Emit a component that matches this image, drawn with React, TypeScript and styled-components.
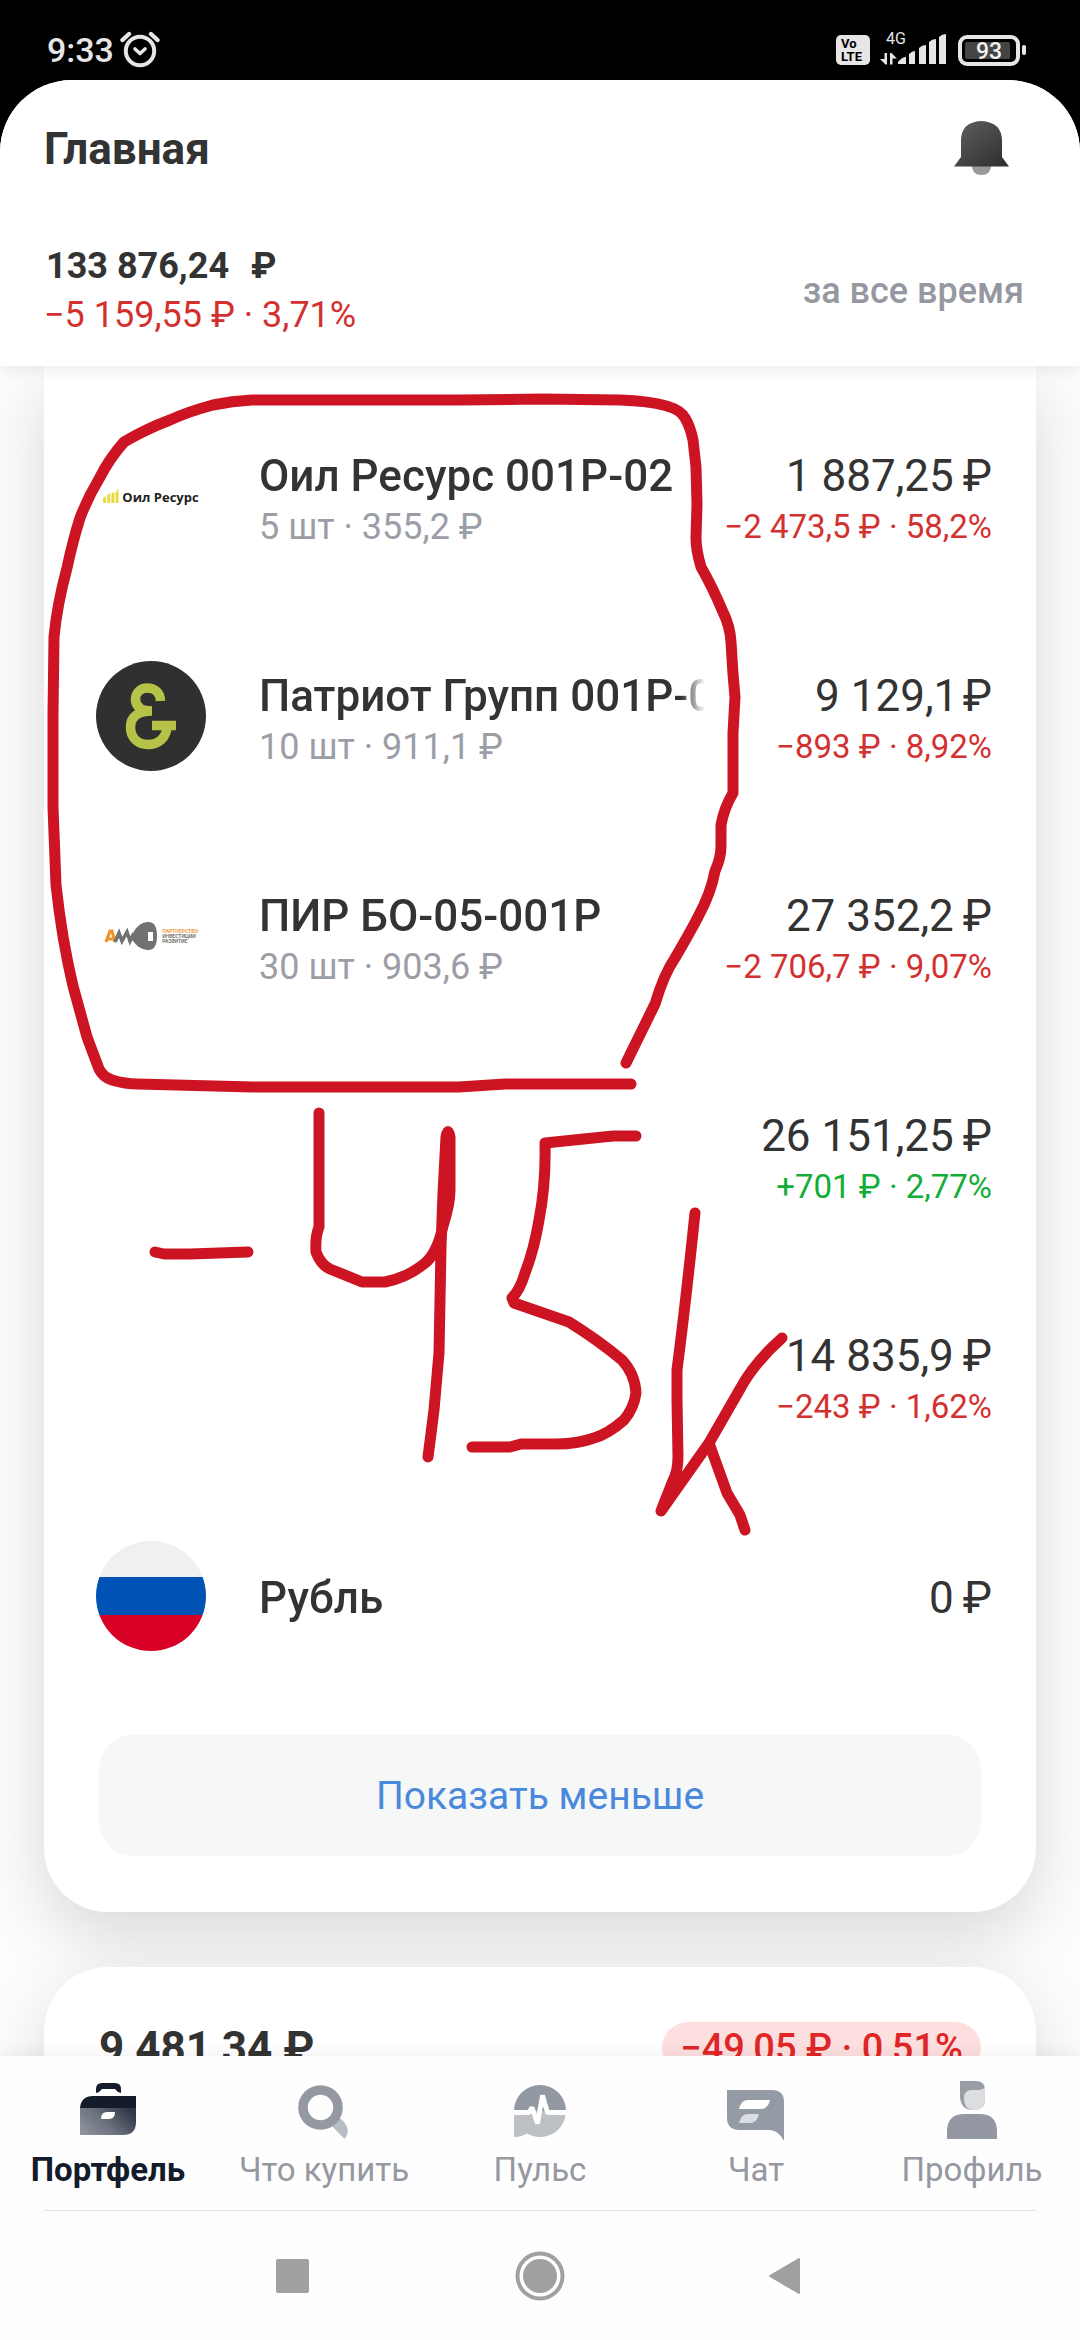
import React from 'react';
import styled, { createGlobalStyle } from 'styled-components';

const GlobalStyle = createGlobalStyle`
  *, *::before, *::after { box-sizing: border-box; }
  body { margin: 0; background: #000; }
  button { border: 0; padding: 0; background: none; font: inherit; color: inherit; cursor: pointer; }
  svg { display: block; flex: none; }
`;

const ink = '#333333';
const muted = '#9598a0';
const red = '#d3312f';
const green = '#12ad36';
const marker = '#cd1423';

const Screen = styled.div`
  display: flex;
  flex-direction: column;
  height: 100vh;
  overflow: hidden;
  background: #000;
  color: ${ink};
  font-family: Roboto, 'Noto Sans', sans-serif;
`;

const StatusBar = styled.div`
  display: flex;
  flex: none;
  align-items: center;
  justify-content: space-between;
  height: 80px;
  padding: 20px 54px 0 47px;
  color: #e6e6e6;
`;

const StatusGroup = styled.div<{ $gap: number }>`
  display: flex;
  align-items: center;
  gap: ${(p) => p.$gap}px;
`;

const Clock = styled.span`
  font-size: 34px;
  line-height: 40px;
  font-weight: 500;
`;

const Volte = styled.span`
  display: flex;
  flex-direction: column;
  width: 34px;
  height: 30px;
  padding: 2px 5px;
  border-radius: 5px;
  background: #e6e6e6;
  color: #000;
  font-size: 13px;
  line-height: 13px;
  font-weight: 700;
`;

const Battery = styled.span`
  display: flex;
  align-items: center;
  gap: 2px;

  &::after {
    content: '';
    width: 4px;
    height: 10px;
    border-radius: 2px;
    background: #e6e6e6;
  }
`;

const BatteryBody = styled.span`
  width: 62px;
  height: 31px;
  padding: 3px;
  border: 4px solid #e6e6e6;
  border-radius: 9px;
`;

const BatteryLevel = styled.span`
  display: block;
  width: 45px;
  height: 17px;
  border-radius: 2px;
  background: #444;
  color: #f2f2f2;
  font-size: 23px;
  line-height: 19px;
  font-weight: 500;
  text-align: center;
  text-indent: 3px;
`;

const Sheet = styled.div`
  display: flex;
  flex: 1;
  flex-direction: column;
  min-height: 0;
  overflow: hidden;
  border-radius: 72px 72px 0 0;
  background: #fdfdfd;
`;

const Header = styled.header`
  flex: none;
  z-index: 1;
  background: #fff;
  box-shadow: 0 4px 14px rgba(0, 0, 0, 0.08);
`;

const TitleRow = styled.div`
  display: flex;
  align-items: center;
  justify-content: space-between;
  height: 138px;
  padding: 0 70px 0 44px;
`;

const Title = styled.h1`
  margin: 0;
  font-size: 44px;
  line-height: 52px;
  font-weight: 700;
`;

const Summary = styled.div`
  display: flex;
  align-items: center;
  justify-content: space-between;
  height: 148px;
  padding: 0 56px 2px 44px;
  font-size: 36px;
  line-height: 49px;
`;

const Total = styled.div`
  display: flex;
  gap: 22px;
  padding-left: 2px;
  font-weight: 700;
`;

const TotalChange = styled.div`
  color: ${red};
`;

const Period = styled.button`
  color: ${muted};
  font-weight: 500;
`;

const Feed = styled.main`
  display: flex;
  flex: 1;
  flex-direction: column;
  gap: 55px;
  min-height: 0;
  padding: 0 44px;
  overflow: hidden;
`;

const Card = styled.section<{ $continued?: boolean }>`
  position: relative;
  flex: none;
  border-radius: ${(p) => (p.$continued ? '0 0 64px 64px' : '64px')};
  background: #fff;
  box-shadow: 0 24px 70px rgba(0, 0, 0, 0.15);
`;

const Positions = styled.ul`
  margin: 0;
  padding: 20px 44px 0 52px;
  list-style: none;
`;

const Position = styled.li`
  display: grid;
  grid-template-columns: 163px minmax(0, 446px) 1fr;
  align-items: center;
  height: 220px;
`;

const Lines = styled.div`
  padding-top: 4px;

  &:has(> :nth-child(2)) { padding-top: 10px; }
`;

const Name = styled.div`
  overflow: hidden;
  font-size: 44px;
  line-height: 52px;
  font-weight: 500;
  white-space: nowrap;
  mask-image: linear-gradient(to right, #000 calc(100% - 24px), transparent);
`;

const Quantity = styled.div`
  color: #9b9ea6;
  font-size: 36px;
  line-height: 50px;
`;

const Numbers = styled(Lines)`
  justify-self: end;
  text-align: right;
  white-space: nowrap;
`;

const Value = styled.div`
  font-size: 44px;
  line-height: 52px;
`;

const Change = styled.div<{ $up?: boolean }>`
  color: ${(p) => (p.$up ? green : red)};
  font-size: 33px;
  line-height: 50px;
`;

const Badge = styled.span<{ $background: string }>`
  display: grid;
  place-items: center;
  width: 110px;
  height: 110px;
  overflow: hidden;
  border-radius: 50%;
  background: ${(p) => p.$background};
`;

const OilLogo = styled.span`
  display: flex;
  align-items: flex-end;
  gap: 3px;
  color: #222;
  font-family: 'Open Sans', sans-serif;
  font-size: 13px;
  line-height: 14px;
  font-weight: 700;
  white-space: nowrap;
`;

const PirLogo = styled.span`
  display: flex;
  align-items: center;
  gap: 4px;
`;

const PirMotto = styled.span`
  color: #777;
  font-size: 5px;
  line-height: 5px;
  font-weight: 700;

  & > span { display: block; }
  & > span:first-child { color: #f0a040; }
`;

const CardFooter = styled.div`
  padding: 29px 55px 56px;
`;

const LessButton = styled.button`
  width: 100%;
  height: 121px;
  border-radius: 34px;
  background: #f6f8f8;
  color: #4a88dc;
  font-size: 39px;
  line-height: 52px;
`;

const AccountRow = styled.div`
  display: flex;
  align-items: center;
  justify-content: space-between;
  padding: 55px;
`;

const AccountTotal = styled.strong`
  font-size: 44px;
  line-height: 52px;
  font-weight: 700;
`;

const AccountChange = styled.span`
  padding: 0 18px;
  border-radius: 28px;
  background: #fddfe0;
  color: #e02626;
  font-size: 38px;
  line-height: 52px;
  font-weight: 500;
`;

const Scribble = styled.svg`
  position: absolute;
  top: 0;
  left: 0;
  pointer-events: none;
`;

const TabBar = styled.nav`
  z-index: 1;
  display: grid;
  flex: none;
  grid-template-columns: repeat(5, 1fr);
  padding: 24px 0 20px;
  background: #fefefe;
  box-shadow: 0 -4px 12px rgba(0, 0, 0, 0.05);
`;

const Tab = styled.button<{ $active?: boolean }>`
  display: flex;
  flex-direction: column;
  align-items: center;
  gap: 10px;
  color: ${(p) => (p.$active ? '#141c2b' : muted)};
  font-size: 33px;
  line-height: 40px;
  font-weight: ${(p) => (p.$active ? 700 : 400)};
  white-space: nowrap;
`;

const SystemBar = styled.div`
  z-index: 1;
  flex: none;
  padding: 0 44px;
  background: #fefefe;
`;

const SystemKeys = styled.div`
  display: flex;
  align-items: center;
  justify-content: center;
  gap: 188px;
  height: 130px;
  border-top: 1px solid #e2e2e2;
`;

const AlarmIcon = () => (
  <svg width="40" height="38" viewBox="0 0 40 38" fill="none" stroke="#e6e6e6" strokeLinecap="round">
    <circle cx="20" cy="20" r="14.2" strokeWidth="4" />
    <path d="M2.500 9 9 3M37.500 9 31 3" strokeWidth="4.400" />
    <path d="m15 18 5 4.500 5-4.500" strokeWidth="3.600" strokeLinejoin="round" />
  </svg>
);

const SignalIcon = () => (
  <svg width="68" height="44" viewBox="0 -4 68 44" fill="#e6e6e6">
    <text x="6" y="12" fontFamily="Roboto" fontSize="16">4G</text>
    <path d="M4.500 21H7v11.500H5.500L0 27h4.500zM10 32.500V21h1.500L17 26.500h-4.500v6z" />
    <path d="M18 32v-2q4-5 8-5v7zM29 32V22q3-3 6-3v13zM39 32V16q3-3 7-3v19zM49 32V10q3-3 7-3v25zM59 32V5q3-3 7-3v30z" />
  </svg>
);

const BellIcon = () => (
  <svg width="58" height="56" viewBox="0 0 58 56">
    <defs>
      <linearGradient id="bell" x1="0" y1="0" x2="1" y2="1">
        <stop offset="0" stopColor="#606060" />
        <stop offset="1" stopColor="#2d2d2d" />
      </linearGradient>
    </defs>
    <path d="M20 44h19c0 7-4 10-9.500 10S20 51 20 44z" fill="#999" />
    <path d="M9 20q0-19 20-20 21 1 21 20v16l7 9.500H2L9 36z" fill="url(#bell)" />
  </svg>
);

const OilBars = () => (
  <svg width="16" height="16" viewBox="0 0 16 16" fill="#e6dc3c">
    <path d="M0 10l3-2v7H0zM4.200 7l3-2v10h-3zM8.400 5.500l3-1.500v11h-3zM12.500 5l3-5v15h-3z" />
  </svg>
);

const Ampersand = () => (
  <svg width="110" height="110" viewBox="0 0 110 110" fill="none" stroke="#b6c248" strokeWidth="9.500">
    <path d="M64.500 40C64 30 57 27 51.500 27c-7 0-12 4.500-12 11.500S45 50 56 50c-13 0-21.500 5-21.500 16S42 83.500 52 83.500 71 77 71 64.500" />
    <path d="M56 64.500h24" />
  </svg>
);

const PirMark = () => (
  <svg width="54" height="30" viewBox="0 0 54 30">
    <path d="m2 21 4-11h2l3 11M4 18h6" fill="none" stroke="#f0942a" strokeWidth="3.200" />
    <path d="m11 21 4-9 3 8 5-9 3 9 4-8" fill="none" stroke="#707173" strokeWidth="3.600" />
    <path d="M27 17C31 6 37 1 44 1c7 0 9 6 9 14s-2 14-9 14c-7 0-13-5-17-12z" fill="#707173" />
    <rect x="44" y="11" width="5" height="9" fill="#fff" />
  </svg>
);

const Flag = () => (
  <svg width="110" height="110" viewBox="0 0 110 110">
    <path d="M0 0h110v36H0z" fill="#f0f0f0" />
    <path d="M0 36h110v38H0z" fill="#0052b4" />
    <path d="M0 74h110v36H0z" fill="#d80027" />
  </svg>
);

const PortfolioIcon = () => (
  <svg width="60" height="60" viewBox="0 0 60 60">
    <defs>
      <linearGradient id="case" x1="0" y1="0.800" x2="1" y2="0.300">
        <stop offset="0" stopColor="#8d929b" />
        <stop offset="0.500" stopColor="#686e7a" />
        <stop offset="1" stopColor="#303745" />
      </linearGradient>
    </defs>
    <path d="M18 13V9q0-6 6-6h13q6 0 6 6v4q-4-1-6-4H24q-2 3-6 4z" fill="#141c2b" />
    <path d="M2 28q1-12 13-12h43v12z" fill="#141c2b" />
    <path d="M2 28h56v14q0 13-13 13H2z" fill="url(#case)" />
    <path d="M23 39q0-7 6-7h8q0 7-6 7z" fill="#fff" />
  </svg>
);

const SearchIcon = () => (
  <svg width="60" height="60" viewBox="0 0 60 60">
    <path d="m36 44 8-7c9 6 13 14 6.500 22z" fill="#b6bdc5" />
    <circle cx="26.500" cy="27.500" r="17.500" fill="none" stroke="#9498a1" strokeWidth="9.600" />
  </svg>
);

const PulseIcon = () => (
  <svg width="60" height="60" viewBox="0 0 60 60">
    <path d="M4 31a26 26 0 0 1 52 0z" fill="#9299a3" />
    <path d="M4 31h52a26 26 0 0 1-39 22.500Q11 57 4 57z" fill="#bdc0c4" />
    <path d="M3 32.500h16l3-5 5.500 16 5-28 5 17H57" fill="none" stroke="#fff" strokeWidth="4.800" strokeLinejoin="bevel" />
  </svg>
);

const ChatIcon = () => (
  <svg width="60" height="60" viewBox="0 0 60 60">
    <path d="M1 10h45q12 0 12 12v39q-6-11-14-11H14Q1 50 1 38z" fill="#949ba4" />
    <path d="M13 29q2-9 9-9h22q-2 9-9 9z" fill="#fff" />
    <path d="M13 43q2-9 9-9h11q-2 9-9 9z" fill="#dadde1" />
  </svg>
);

const ProfileIcon = () => (
  <svg width="60" height="60" viewBox="0 0 60 60">
    <path d="M18 1h16q9 0 9 9v9q0 11-12 11T18 17z" fill="#999ea5" />
    <path d="M22 18q0-8 8-8h6q5 0 7-3v11q0 12-11 12-10 0-10-12z" fill="#dcdee2" />
    <path d="M5 59V50q1-16 17-16h16q16 0 17 16v9z" fill="#9498a3" />
  </svg>
);

// Sums in the list put a thin space before the currency sign, a hair space after a closing 1.
const positions = [
  {
    name: 'Оил Ресурс 001P-02',
    quantity: '5 шт · 355,2 ₽',
    value: '1 887,25\u2009₽',
    change: '−2 473,5 ₽ · 58,2%',
    badge: '#fff',
    logo: <OilLogo><OilBars />Оил Ресурс</OilLogo>,
  },
  {
    name: 'Патриот Групп 001P-0',
    quantity: '10 шт · 911,1 ₽',
    value: '9 129,1\u200A₽',
    change: '−893 ₽ · 8,92%',
    badge: '#303030',
    logo: <Ampersand />,
  },
  {
    name: 'ПИР БО-05-001P',
    quantity: '30 шт · 903,6 ₽',
    value: '27 352,2\u2009₽',
    change: '−2 706,7 ₽ · 9,07%',
    badge: '#fff',
    logo: (
      <PirLogo>
        <PirMark />
        <PirMotto>
          <span>ПАРТНЕРСТВО</span>
          <span>ИНВЕСТИЦИИ</span>
          <span>РАЗВИТИЕ</span>
        </PirMotto>
      </PirLogo>
    ),
  },
  { value: '26 151,25\u2009₽', change: '+701 ₽ · 2,77%', up: true, badge: '#fff' },
  { value: '14 835,9\u2009₽', change: '−243 ₽ · 1,62%', badge: '#fff' },
  { name: 'Рубль', value: '0\u2009₽', badge: '#fff', logo: <Flag /> },
];

const tabs = [
  { label: 'Портфель', icon: <PortfolioIcon />, active: true },
  { label: 'Что купить', icon: <SearchIcon /> },
  { label: 'Пульс', icon: <PulseIcon /> },
  { label: 'Чат', icon: <ChatIcon /> },
  { label: 'Профиль', icon: <ProfileIcon /> },
];

// Hand-drawn marks over the list: the loop round three bonds and the "-45k" note.
const Marks = () => (
  <Scribble width="992" height="1200" viewBox="44 366 992 1200" fill="none" stroke={marker} strokeWidth="11" strokeLinecap="round" strokeLinejoin="round" aria-hidden="true">
    <path d="M626 1063 655 1004Q664 974 675 958Q688 936 698 917Q711 893 715 871Q721 858 721 846V825Q724 808 733 793V733L735 697 733 674 731 642Q730 626 723 612Q712 586 701 567Q696 550 696 538L697 504 696 467 693 440Q690 426 685 418Q678 402 620 400L542 399 459 400H252Q232 401 213 405Q190 411 170 420Q146 429 124 442Q109 459 99 479Q88 497 80 518Q73 540 67 568Q57 605 54 637L53 715V807L56 885Q62 940 73 986L87 1037 99 1069Q103 1077 112 1080Q125 1084 138 1084L252 1087H459L505 1084H631" />
    <path d="M155 1252 164 1254H190L248 1252" />
    <path d="M319 1113V1227Q315 1237 316 1252Q321 1265 330 1269L362 1282H385Q406 1278 424 1264Q437 1254 443 1226Q450 1204 450 1190V1137Q448 1126 446 1137L443 1193 441 1247 440 1300 439 1353 434 1410 428 1457" />
    <path d="M636 1136H614L603 1137 545 1143Q546 1184 539 1220Q534 1250 525 1273Q520 1290 512 1298L514 1303 569 1322Q598 1340 622 1360Q635 1374 636 1393Q634 1408 624 1420Q608 1434 594 1438Q577 1444 557 1444H521L510 1447H472" />
    <path d="M695 1213Q686 1300 677 1370V1400L678 1457Q678 1472 672 1483L661 1511 709 1443 740 1389Q754 1363 782 1338M709 1443 727 1493 740 1515 745 1530" />
  </Scribble>
);

export default function App() {
  return (
    <Screen>
      <GlobalStyle />
      <StatusBar>
        <StatusGroup $gap={6}>
          <Clock>9:33</Clock>
          <AlarmIcon />
        </StatusGroup>
        <StatusGroup $gap={10}>
          <Volte><span>Vo</span><span>LTE</span></Volte>
          <SignalIcon />
          <Battery>
            <BatteryBody><BatteryLevel>93</BatteryLevel></BatteryBody>
          </Battery>
        </StatusGroup>
      </StatusBar>

      <Sheet>
        <Header>
          <TitleRow>
            <Title>Главная</Title>
            <button type="button" aria-label="Уведомления"><BellIcon /></button>
          </TitleRow>
          <Summary>
            <div>
              <Total><span>133 876,24</span><span>₽</span></Total>
              <TotalChange>−5 159,55 ₽ · 3,71%</TotalChange>
            </div>
            <Period type="button">за все время</Period>
          </Summary>
        </Header>

        <Feed>
          <Card $continued>
            <Positions>
              {positions.map((p) => (
                <Position key={p.value}>
                  <Badge $background={p.badge}>{p.logo}</Badge>
                  <Lines>
                    {p.name && <Name>{p.name}</Name>}
                    {p.quantity && <Quantity>{p.quantity}</Quantity>}
                  </Lines>
                  <Numbers>
                    <Value>{p.value}</Value>
                    {p.change && <Change $up={p.up}>{p.change}</Change>}
                  </Numbers>
                </Position>
              ))}
            </Positions>
            <CardFooter>
              <LessButton type="button">Показать меньше</LessButton>
            </CardFooter>
            <Marks />
          </Card>
          <Card>
            <AccountRow>
              <AccountTotal>9 481,34 ₽</AccountTotal>
              <AccountChange>−49,05 ₽ · 0,51%</AccountChange>
            </AccountRow>
          </Card>
        </Feed>

        <TabBar>
          {tabs.map((t) => (
            <Tab key={t.label} type="button" $active={t.active}>
              {t.icon}
              <span>{t.label}</span>
            </Tab>
          ))}
        </TabBar>
        <SystemBar>
          <SystemKeys>
            <button type="button" aria-label="Недавние">
              <svg width="60" height="60" viewBox="0 0 60 60"><rect x="14" y="13" width="33" height="34" rx="2" fill="#a0a0a0" /></svg>
            </button>
            <button type="button" aria-label="Домой">
              <svg width="60" height="60" viewBox="0 0 60 60">
                <circle cx="30" cy="30" r="22.500" fill="none" stroke="#a0a0a0" strokeWidth="4" />
                <circle cx="30" cy="30" r="17" fill="#a0a0a0" />
              </svg>
            </button>
            <button type="button" aria-label="Назад">
              <svg width="60" height="60" viewBox="0 0 60 60"><path d="M12 30 41 13v34z" fill="#a0a0a0" stroke="#a0a0a0" strokeWidth="2" strokeLinejoin="round" /></svg>
            </button>
          </SystemKeys>
        </SystemBar>
      </Sheet>
    </Screen>
  );
}
